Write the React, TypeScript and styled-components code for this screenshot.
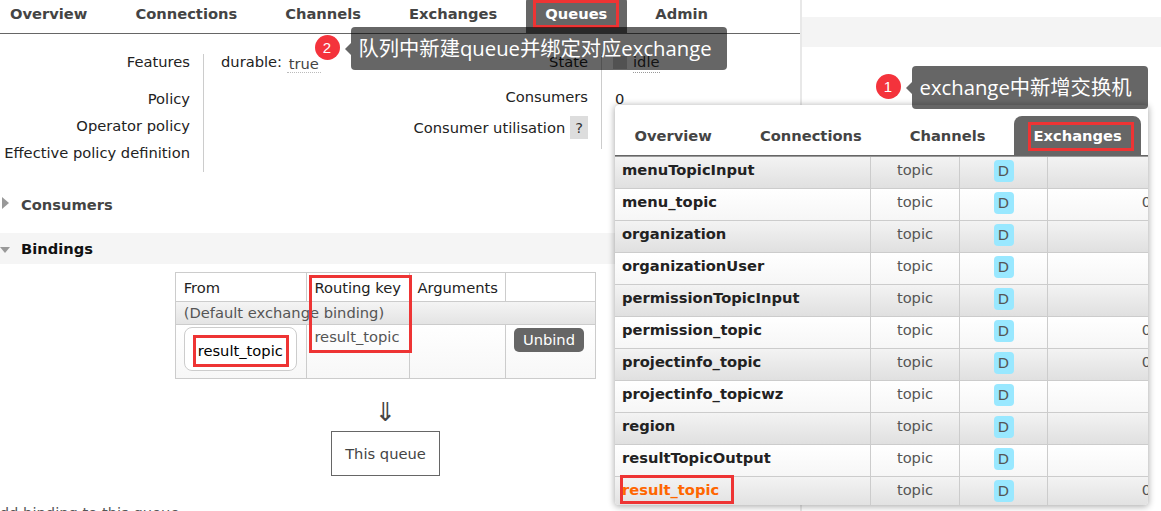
import React from "react";
import styled, { createGlobalStyle, css } from "styled-components";

const GlobalStyle = createGlobalStyle`
  html, body { margin: 0; padding: 0; background: #fff; }
  body { font-family: "DejaVu Sans", Verdana, sans-serif; font-size: 14.7px; color: #222; }
  * { box-sizing: border-box; }
`;

const Screen = styled.div`
  position: relative;
  width: 1161px;
  height: 511px;
  overflow: hidden;
  display: grid;
  grid-template-columns: 800px 1fr;
`;

/* ---------- left page (queue details) ---------- */
const Page = styled.div`
  height: 511px;
  display: flex;
  flex-direction: column;
`;

const NavBar = styled.nav<{ $page?: boolean }>`
  display: flex;
  gap: 9px;
  border-bottom: 1px solid #666;
  ${(p) =>
    p.$page
      ? css`
          margin: -6.5px -1px 0 -9.5px;
        `
      : css`
          padding-top: 11px;
        `}
`;

const Tab = styled.div<{ $active?: boolean }>`
  position: relative;
  height: 39px;
  line-height: 39px;
  padding: 0 19.5px;
  font-weight: bold;
  color: #444;
  white-space: nowrap;
  border-radius: 8px 8px 0 0;
  ${(p) =>
    p.$active &&
    css`
      background: #666;
      color: #fff;
    `}
`;

const Highlight = styled.span<{ $t: number; $l: number; $w: number; $h: number }>`
  position: absolute;
  top: ${(p) => p.$t}px;
  left: ${(p) => p.$l}px;
  width: ${(p) => p.$w}px;
  height: ${(p) => p.$h}px;
  border: 3px solid #ee3434;
  pointer-events: none;
  z-index: 1;
`;

const ContentRule = styled.div`
  margin-top: 5px;
  height: 1px;
  background: #e2e2e2;
`;

const FactsRow = styled.div`
  display: flex;
  margin-top: 15.5px;
`;

const FactTable = styled.div<{ $rows: string; $valueW: number }>`
  display: grid;
  grid-template-columns: 204px ${(p) => p.$valueW}px;
  grid-template-rows: ${(p) => p.$rows};
  line-height: 14px;
`;

const FactLabel = styled.div<{ $pt?: number }>`
  text-align: right;
  padding: ${(p) => p.$pt ?? 0}px 13px 0 0;
  border-right: 1px solid #ccc;
  white-space: nowrap;
  color: #222;
`;

const FactValue = styled.div<{ $pt?: number; $pl: number }>`
  padding: ${(p) => p.$pt ?? 0}px 0 0 ${(p) => p.$pl}px;
  white-space: nowrap;
  color: #222;
`;

const Abbr = styled.span`
  display: inline-block;
  padding: 0 2px;
  color: #444;
  border-bottom: 1px dotted #bbb;
  vertical-align: -2px;
  line-height: 16px;
`;

const StateSwatch = styled.span`
  display: inline-block;
  width: 14px;
  height: 13px;
  background: #ccc;
  margin-right: 6px;
  vertical-align: -2px;
`;

const StateText = styled.span`
  border-bottom: 1px dotted #999;
  color: #333;
  padding-bottom: 2px;
`;

const HelpTag = styled.span`
  display: inline-block;
  margin-left: 5px;
  padding: 3px 5px;
  line-height: 17px;
  background: #ddd;
  color: #333;
`;

const SectionHeader = styled.h2<{ $open?: boolean; $mt: number }>`
  margin: ${(p) => p.$mt}px 0 0;
  height: 31px;
  line-height: 31px;
  display: flex;
  align-items: center;
  font-size: 14.7px;
  font-weight: bold;
  color: ${(p) => (p.$open ? "#111" : "#444")};
  background: ${(p) => (p.$open ? "#f5f5f5" : "transparent")};
`;

const CaretSlot = styled.span`
  width: 21px;
  flex-shrink: 0;
  display: flex;
  align-items: center;
`;

const Caret = styled.span<{ $open?: boolean }>`
  width: 0;
  height: 0;
  ${(p) =>
    p.$open
      ? css`
          margin-top: 2.4px;
          border-top: 6px solid #999;
          border-left: 5.5px solid transparent;
          border-right: 5.5px solid transparent;
        `
      : css`
          margin: -3px 0 0 2px;
          border-left: 7.3px solid #999;
          border-top: 6.6px solid transparent;
          border-bottom: 6.6px solid transparent;
        `}
`;

const BindingsBody = styled.div`
  width: 771px;
  display: flex;
  flex-direction: column;
  align-items: center;
  margin-top: 8.3px;
`;

const TableWrap = styled.div`
  position: relative;
`;

const BindTable = styled.table`
  border-collapse: collapse;
  table-layout: fixed;
  border: 1px solid #ccc;
  line-height: 17px;
  font-size: 14.7px;
`;

const HeadCell = styled.th<{ $w: number }>`
  width: ${(p) => p.$w}px;
  border: 1px solid #ccc;
  padding: 6px 7.5px 5px;
  text-align: left;
  font-weight: normal;
  color: #222;
  white-space: nowrap;
`;

const GroupRow = styled.tr`
  background: linear-gradient(#f4f4f4, #e3e3e3);
`;

const GroupCell = styled.td`
  border: 1px solid #ccc;
  padding: 2px 7.5px 2.5px;
  color: #555;
  white-space: nowrap;
`;

const BodyRow = styled.tr`
  background: linear-gradient(#fff, #f7f7f7);
  height: 54px;
`;

const BodyCell = styled.td<{ $pt?: number }>`
  border: 1px solid #ccc;
  padding: ${(p) => p.$pt ?? 3}px 7.5px 0;
  vertical-align: top;
  color: #555;
  white-space: nowrap;
`;

const ExchangeChip = styled.span`
  position: relative;
  display: inline-block;
  border: 1px solid #ccc;
  border-radius: 8px;
  padding: 14px 13.5px 11px 13px;
  line-height: 17px;
  color: #000;
  background: #fff;
`;

const UnbindButton = styled.button`
  border: none;
  border-radius: 5px;
  background: #666;
  color: #fff;
  font-family: "DejaVu Sans", Verdana, sans-serif;
  font-size: 14.7px;
  line-height: 16.4px;
  padding: 4px 9px;
`;

const DownArrow = styled.div`
  margin-top: 18px;
  font-size: 26px;
  line-height: 30px;
  color: #444;
`;

const QueueBox = styled.div`
  margin-top: 4px;
  border: 1px solid #666;
  padding: 13px 13.1px;
  line-height: 17px;
  color: #444;
  background: #fff;
`;

const AddBinding = styled.h3`
  align-self: flex-start;
  margin: 28px 0 0 -10px;
  font-size: 14.7px;
  font-weight: normal;
  line-height: 17px;
  color: #555;
  white-space: nowrap;
`;

/* ---------- right background area ---------- */
const SideArea = styled.div`
  border-left: 2px solid #e8e8e8;
`;

const GrayBand = styled.div`
  margin-top: 17px;
  height: 30px;
  background: #f4f4f4;
`;

/* ---------- overlaid exchanges screenshot ---------- */
const ExchangesWindow = styled.div`
  position: absolute;
  left: 615px;
  top: 105px;
  width: 533px;
  height: 400px;
  background: #fff;
  border-radius: 4px;
  box-shadow: 0 1px 6px 1px rgba(0, 0, 0, 0.3);
  overflow: hidden;
  z-index: 2;
`;

const ExchangeList = styled.div`
  border-top: 1px solid #999;
  width: 545px;
`;

const ExchangeRow = styled.div<{ $odd: boolean }>`
  display: grid;
  grid-template-columns: 256px 89px 88px 112px;
  height: 32px;
  border-bottom: 1px solid #ccc;
  line-height: 17px;
  background: ${(p) =>
    p.$odd ? "linear-gradient(#f3f3f3, #e0e0e0)" : "linear-gradient(#fff, #f6f6f6)"};
`;

const NameCell = styled.div<{ $hot?: boolean }>`
  position: relative;
  padding: 4px 7px 0;
  font-weight: bold;
  color: ${(p) => (p.$hot ? "#ff6600" : "#222")};
  border-right: 1px solid #ccc;
  white-space: nowrap;
`;

const TypeCell = styled.div`
  padding-top: 4px;
  text-align: center;
  color: #555;
  border-right: 1px solid #ccc;
`;

const FeatureCell = styled.div`
  padding-top: 3px;
  display: flex;
  justify-content: center;
  align-items: flex-start;
  border-right: 1px solid #ccc;
`;

const DurableBadge = styled.span`
  width: 20px;
  height: 22px;
  line-height: 22px;
  text-align: center;
  border-radius: 4px;
  background: #99e8ff;
  color: #555;
`;

const RateCell = styled.div`
  padding: 4px 9px 0 0;
  text-align: right;
  color: #555;
`;

/* ---------- annotations ---------- */
const Callout = styled.div<{ $x: number; $y: number }>`
  position: absolute;
  left: ${(p) => p.$x}px;
  top: ${(p) => p.$y}px;
  display: flex;
  align-items: center;
  gap: 11.5px;
  z-index: 3;
`;

const StepBadge = styled.span`
  width: 25px;
  height: 25px;
  border-radius: 50%;
  background: #f4333c;
  color: #fff;
  font-family: "Liberation Sans", Arial, sans-serif;
  font-size: 15px;
  line-height: 25px;
  text-align: center;
  margin-top: -3px;
`;

const Bubble = styled.div<{ $w: number }>`
  position: relative;
  width: ${(p) => p.$w}px;
  height: 43px;
  line-height: 43px;
  padding: 0 0 0 7.5px;
  border-radius: 4px;
  background: rgba(0, 0, 0, 0.6);
  color: #fff;
  font-family: "Open Sans", "Noto Sans CJK SC", sans-serif;
  font-size: 20.3px;
  white-space: nowrap;
  &::before {
    content: "";
    position: absolute;
    left: -6px;
    top: 50%;
    margin-top: -6px;
    border-right: 6px solid rgba(0, 0, 0, 0.6);
    border-top: 6px solid transparent;
    border-bottom: 6px solid transparent;
  }
`;

const pageTabs = ["Overview", "Connections", "Channels", "Exchanges", "Queues", "Admin"];
const windowTabs = ["Overview", "Connections", "Channels", "Exchanges"];

const exchanges: { name: string; zero?: boolean; hot?: boolean }[] = [
  { name: "menuTopicInput" },
  { name: "menu_topic", zero: true },
  { name: "organization" },
  { name: "organizationUser" },
  { name: "permissionTopicInput" },
  { name: "permission_topic", zero: true },
  { name: "projectinfo_topic", zero: true },
  { name: "projectinfo_topicwz" },
  { name: "region" },
  { name: "resultTopicOutput" },
  { name: "result_topic", zero: true, hot: true },
];

export default function App() {
  return (
    <>
      <GlobalStyle />
      <Screen>
        <Page>
          <NavBar $page>
            {pageTabs.map((t) => (
              <Tab key={t} $active={t === "Queues"}>
                {t}
                {t === "Queues" && <Highlight $t={6.5} $l={7.6} $w={86} $h={27.5} />}
              </Tab>
            ))}
          </NavBar>
          <ContentRule />

          <FactsRow>
            <FactTable $rows="38px 26.7px 26.7px 26.7px" $valueW={194}>
              <FactLabel $pt={1}>Features</FactLabel>
              <FactValue $pt={1} $pl={17}>
                durable: <Abbr>true</Abbr>
              </FactValue>
              <FactLabel>Policy</FactLabel>
              <FactValue $pl={17} />
              <FactLabel>Operator policy</FactLabel>
              <FactValue $pl={17} />
              <FactLabel $pt={0.8}>Effective policy definition</FactLabel>
              <FactValue $pl={17} />
            </FactTable>
            <FactTable $rows="36px 24px 35px" $valueW={198}>
              <FactLabel $pt={1}>State</FactLabel>
              <FactValue $pt={1} $pl={11}>
                <StateSwatch />
                <StateText>idle</StateText>
              </FactValue>
              <FactLabel>Consumers</FactLabel>
              <FactValue $pt={1.5} $pl={13}>
                0
              </FactValue>
              <FactLabel $pt={1.6}>
                Consumer utilisation<HelpTag>?</HelpTag>
              </FactLabel>
              <FactValue $pl={11} />
            </FactTable>
          </FactsRow>

          <SectionHeader $mt={17.4}>
            <CaretSlot>
              <Caret />
            </CaretSlot>
            Consumers
          </SectionHeader>
          <SectionHeader $open $mt={12.6}>
            <CaretSlot>
              <Caret $open />
            </CaretSlot>
            Bindings
          </SectionHeader>

          <BindingsBody>
            <TableWrap>
              <BindTable>
                <thead>
                  <tr>
                    <HeadCell $w={130.7}>From</HeadCell>
                    <HeadCell $w={103}>Routing key</HeadCell>
                    <HeadCell $w={95.6}>Arguments</HeadCell>
                    <HeadCell $w={89.4} />
                  </tr>
                </thead>
                <tbody>
                  <GroupRow>
                    <GroupCell colSpan={4}>(Default exchange binding)</GroupCell>
                  </GroupRow>
                  <BodyRow>
                    <BodyCell $pt={2.4}>
                      <ExchangeChip>
                        result_topic
                        <Highlight $t={6.6} $l={8} $w={96} $h={32} />
                      </ExchangeChip>
                    </BodyCell>
                    <BodyCell>result_topic</BodyCell>
                    <BodyCell />
                    <BodyCell>
                      <UnbindButton>Unbind</UnbindButton>
                    </BodyCell>
                  </BodyRow>
                </tbody>
              </BindTable>
              <Highlight $t={2.7} $l={134} $w={103.3} $h={78.3} />
            </TableWrap>
            <DownArrow>⇓</DownArrow>
            <QueueBox>This queue</QueueBox>
            <AddBinding>Add binding to this queue</AddBinding>
          </BindingsBody>
        </Page>

        <SideArea>
          <GrayBand />
        </SideArea>

        <ExchangesWindow>
          <NavBar>
            {windowTabs.map((t) => (
              <Tab key={t} $active={t === "Exchanges"}>
                {t}
                {t === "Exchanges" && <Highlight $t={6} $l={14.3} $w={106} $h={28.7} />}
              </Tab>
            ))}
          </NavBar>
          <ExchangeList>
            {exchanges.map((ex, i) => (
              <ExchangeRow key={ex.name} $odd={i % 2 === 0}>
                <NameCell $hot={ex.hot}>
                  {ex.name}
                  {ex.hot && <Highlight $t={-2} $l={5} $w={114} $h={29} />}
                </NameCell>
                <TypeCell>topic</TypeCell>
                <FeatureCell>
                  <DurableBadge>D</DurableBadge>
                </FeatureCell>
                <RateCell>{ex.zero ? "0" : ""}</RateCell>
              </ExchangeRow>
            ))}
          </ExchangeList>
        </ExchangesWindow>

        <Callout $x={314.5} $y={27}>
          <StepBadge>2</StepBadge>
          <Bubble $w={376}>队列中新建queue并绑定对应exchange</Bubble>
        </Callout>
        <Callout $x={875.5} $y={66}>
          <StepBadge>1</StepBadge>
          <Bubble $w={236}>exchange中新增交换机</Bubble>
        </Callout>
      </Screen>
    </>
  );
}
